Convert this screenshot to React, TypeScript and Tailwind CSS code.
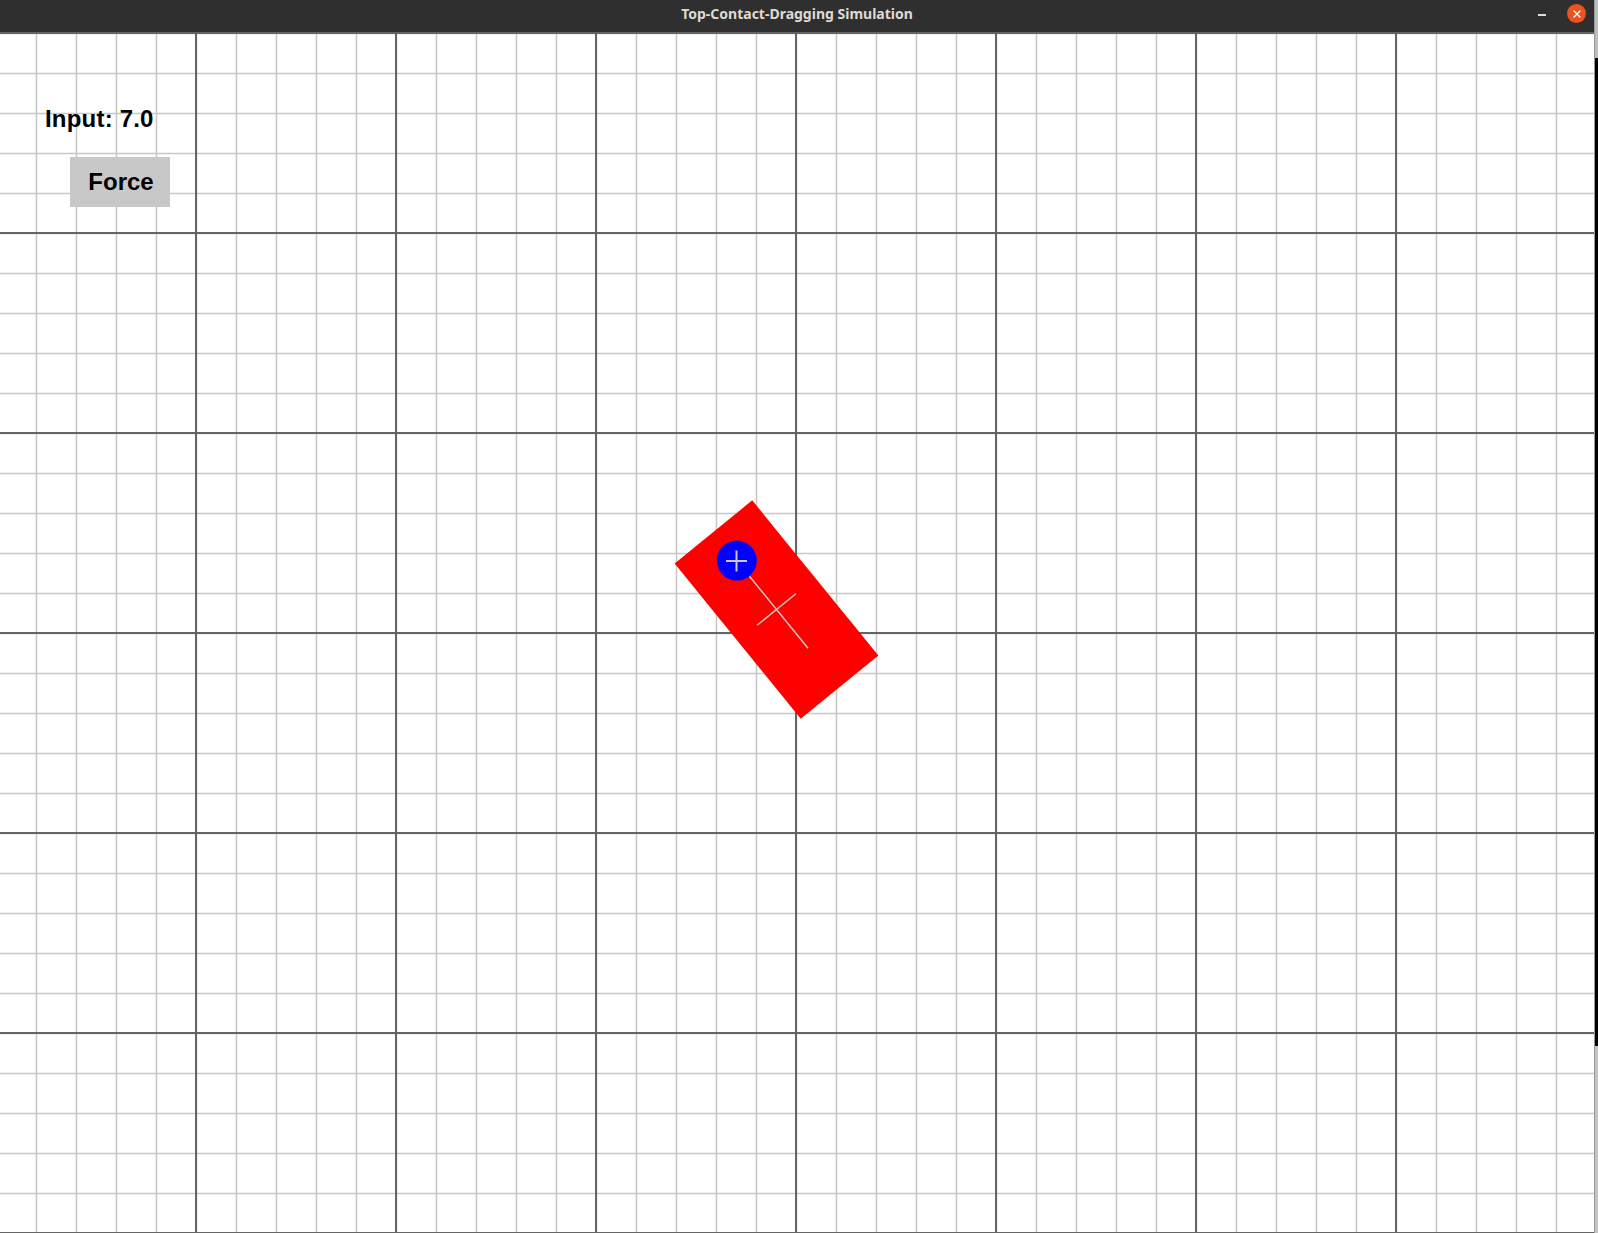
import { X } from 'lucide-react';

const GRID_W = 1600;
const GRID_H = 1200;
const STEP = 40;
const MAJOR = 200;

// body pose in canvas coordinates
const body = { x: 780.5, y: 576.5, angle: 50.9, len: 200, wid: 100 };
const contact = { x: 740.5, y: 528, r: 20 };

function Grid() {
  const xs: number[] = [];
  const ys: number[] = [];
  for (let x = 0; x <= GRID_W; x += STEP) xs.push(x);
  for (let y = 0; y <= GRID_H; y += STEP) ys.push(y);

  return (
    <svg width={1594} height={1201} viewBox="4 -1 1594 1201" className="block">
      <g>
        {xs.map((x) => (
          <line key={`v${x}`} x1={x + 0.5} y1={-1} x2={x + 0.5} y2={GRID_H + 1} stroke="#c8c8c8" strokeWidth={1.6} />
        ))}
        {ys.map((y) => (
          <line key={`h${y}`} x1={0} y1={y + 0.5} x2={GRID_W} y2={y + 0.5} stroke="#c8c8c8" strokeWidth={1.6} />
        ))}
      </g>
      <g shapeRendering="crispEdges">
        {xs.filter((x) => x % MAJOR === 0).map((x) => (
          <line key={`V${x}`} x1={x} y1={-1} x2={x} y2={GRID_H + 1} stroke="#646464" strokeWidth={2} />
        ))}
        {ys.filter((y) => y % MAJOR === 0).map((y) => (
          <line key={`H${y}`} x1={0} y1={y} x2={GRID_W} y2={y} stroke="#646464" strokeWidth={2} />
        ))}
      </g>

      <g transform={`translate(${body.x} ${body.y}) rotate(${body.angle})`}>
        <rect x={-body.len / 2} y={-body.wid / 2} width={body.len} height={body.wid} fill="#ff0000" />
        <line x1={-50} y1={0} x2={50} y2={0} stroke="#c8c8c8" strokeWidth={1.5} />
        <line x1={0} y1={-25} x2={0} y2={25} stroke="#c8c8c8" strokeWidth={1.5} />
        <circle cx={-63} cy={0} r={contact.r} fill="#0000ff" />
      </g>

      {/* contact point marker */}
      <line x1={contact.x - 10.5} y1={contact.y} x2={contact.x + 10.5} y2={contact.y} stroke="#c8c8c8" strokeWidth={2} />
      <line x1={contact.x} y1={contact.y - 10.5} x2={contact.x} y2={contact.y + 10.5} stroke="#c8c8c8" strokeWidth={2} />
    </svg>
  );
}

export default function App() {
  return (
    <div className="flex h-[1233px] w-[1598px] overflow-hidden bg-white">
      <div className="flex w-[1594px] flex-col">
        <div className="relative flex h-[32px] shrink-0 items-center justify-center bg-[#2f2f2f] pb-[6px]">
          <span className="text-[14px] font-bold text-[#dfdbd2] [font-family:'Noto_Sans',sans-serif]">
            Top-Contact-Dragging Simulation
          </span>
          <div className="absolute right-[8px] top-[4px] flex items-center gap-[21px]">
            <div className="mt-[3px] h-[1.5px] w-[8px] bg-[#dcdcdc]" />
            <button className="flex h-[19px] w-[19px] items-center justify-center rounded-full bg-[#e95420]">
              <X size={12} strokeWidth={2.6} color="#ffffff" />
            </button>
          </div>
        </div>

        <div className="relative h-[1201px] overflow-hidden">
          <Grid />

          <div className="absolute left-[45px] top-[75px] text-[24px] font-bold leading-none tracking-[0.2px] text-black [font-family:'Liberation_Sans',Arial,sans-serif]">
            Input: 7.0
          </div>
          <button className="absolute left-[70px] top-[125px] flex h-[50px] w-[100px] items-center justify-center bg-[#c8c8c8] pl-[2px] text-[24px] font-bold leading-none text-black [font-family:'Liberation_Sans',Arial,sans-serif]">
            Force
          </button>
        </div>
      </div>

      <div className="flex w-[4px] flex-col border-l border-[#9a9a9a]">
        <div className="h-[58px] bg-[#bdbdbd]" />
        <div className="h-[988px] bg-black" />
        <div className="flex-1 bg-[#c4c4c4]" />
      </div>
    </div>
  );
}
